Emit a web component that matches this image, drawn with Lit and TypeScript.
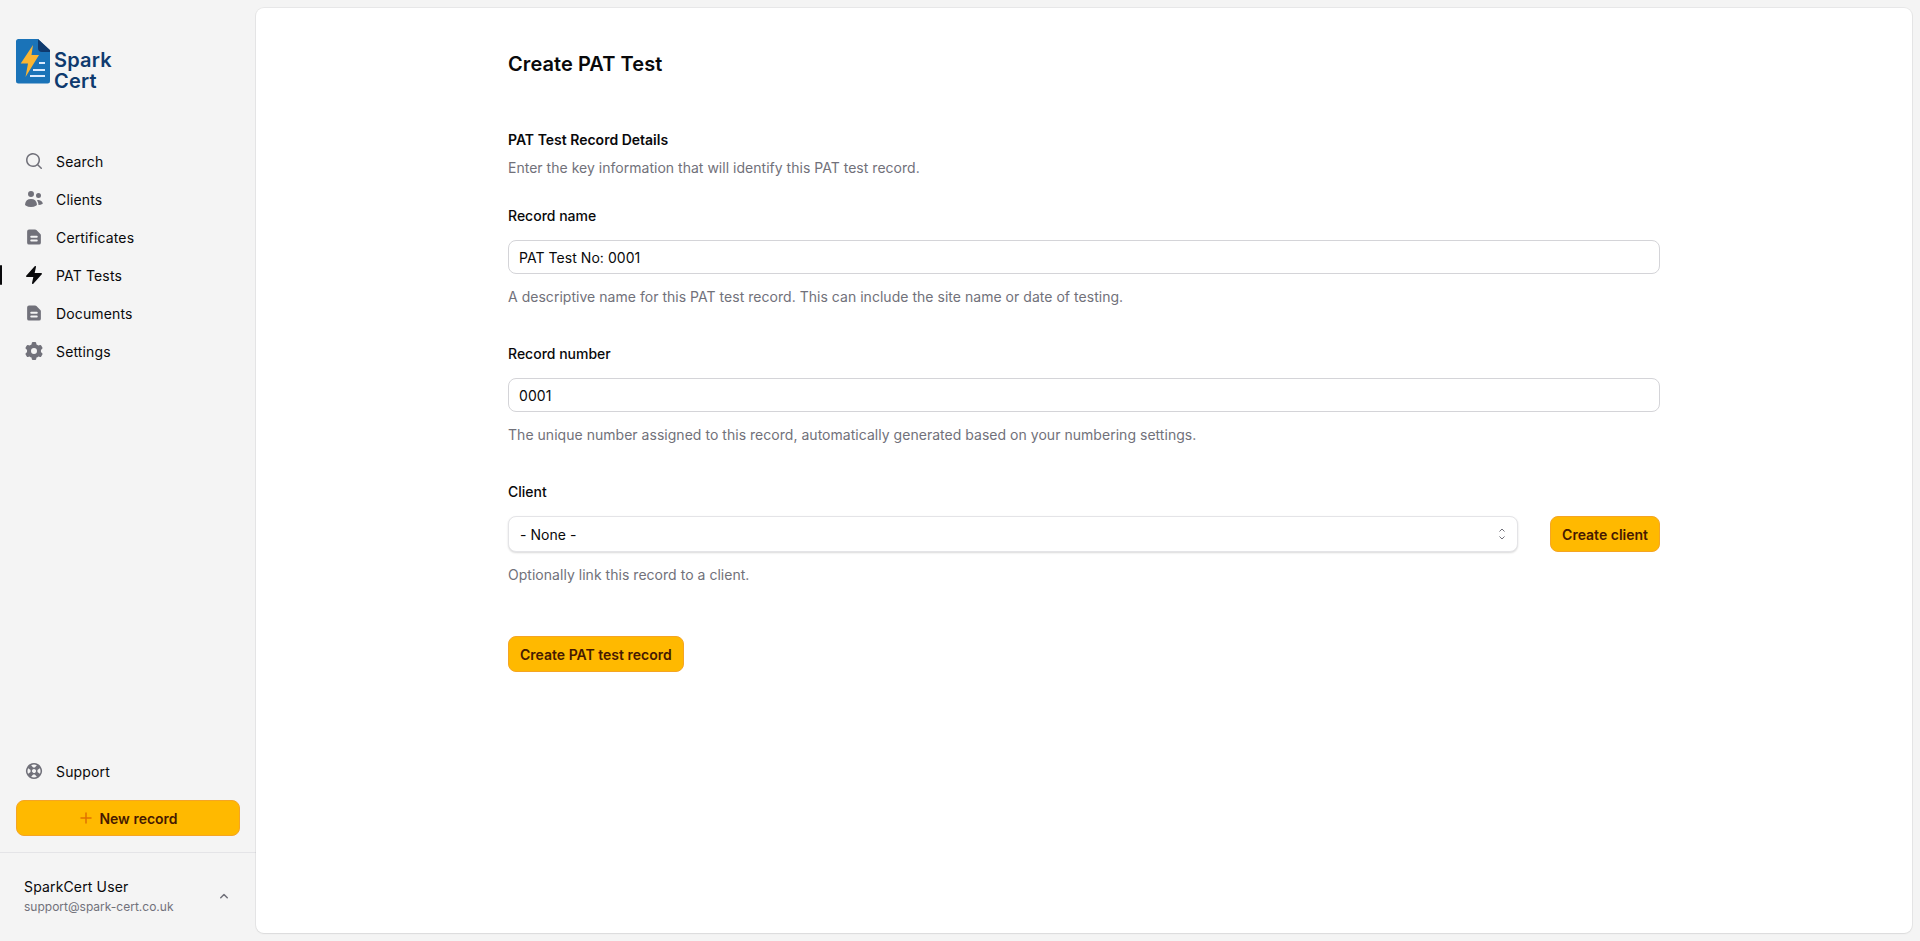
import { LitElement, html, css, svg } from "lit";
import { customElement } from "lit/decorators.js";

const ICONS: Record<string, [string, string]> = {
  search: ["0 0 20 20", "M9 3.5a5.5 5.5 0 1 0 0 11 5.5 5.5 0 0 0 0-11ZM2 9a7 7 0 1 1 12.452 4.391l3.328 3.329a.75.75 0 1 1-1.06 1.06l-3.329-3.328A7 7 0 0 1 2 9Z"],
  users: ["0 0 20 20", "M7 8a3 3 0 1 0 0-6 3 3 0 0 0 0 6ZM14.5 9a2.5 2.5 0 1 0 0-5 2.5 2.5 0 0 0 0 5ZM1.615 16.428a1.224 1.224 0 0 1-.569-1.175 6.002 6.002 0 0 1 11.908 0c.058.467-.172.92-.57 1.174A9.953 9.953 0 0 1 7 18a9.953 9.953 0 0 1-5.385-1.572ZM14.5 16h-.106c.07-.297.088-.611.048-.933a7.47 7.47 0 0 0-1.588-3.755 4.502 4.502 0 0 1 5.874 2.636.818.818 0 0 1-.36.98A7.465 7.465 0 0 1 14.5 16Z"],
  doc: ["0 0 16 16", "M4 2a1.5 1.5 0 0 0-1.5 1.5v9A1.5 1.5 0 0 0 4 14h8a1.5 1.5 0 0 0 1.5-1.5V6.621a1.5 1.5 0 0 0-.44-1.06L9.94 2.439A1.5 1.5 0 0 0 8.878 2H4Zm1 5.75A.75.75 0 0 1 5.75 7h4.5a.75.75 0 0 1 0 1.5h-4.5A.75.75 0 0 1 5 7.75Zm0 3a.75.75 0 0 1 .75-.75h4.5a.75.75 0 0 1 0 1.5h-4.5a.75.75 0 0 1-.75-.75Z"],
  bolt: ["0 0 20 20", "M11.983 1.907a.75.75 0 0 0-1.292-.657l-8.5 9.5A.75.75 0 0 0 2.75 12h6.572l-1.305 6.093a.75.75 0 0 0 1.292.657l8.5-9.5A.75.75 0 0 0 17.25 8h-6.572l1.305-6.093Z"],
  cog: ["0 0 20 20", "M7.84 1.804A1 1 0 0 1 8.82 1h2.36a1 1 0 0 1 .98.804l.331 1.652a6.993 6.993 0 0 1 1.929 1.115l1.598-.54a1 1 0 0 1 1.186.447l1.18 2.044a1 1 0 0 1-.205 1.251l-1.267 1.113a7.047 7.047 0 0 1 0 2.228l1.267 1.113a1 1 0 0 1 .206 1.25l-1.18 2.045a1 1 0 0 1-1.187.447l-1.598-.54a6.993 6.993 0 0 1-1.929 1.115l-.33 1.652a1 1 0 0 1-.98.804H8.82a1 1 0 0 1-.98-.804l-.331-1.652a6.993 6.993 0 0 1-1.929-1.115l-1.598.54a1 1 0 0 1-1.186-.447l-1.18-2.044a1 1 0 0 1 .205-1.251l1.267-1.114a7.05 7.05 0 0 1 0-2.227L1.821 7.773a1 1 0 0 1-.206-1.25l1.18-2.045a1 1 0 0 1 1.187-.447l1.598.54A6.992 6.992 0 0 1 7.51 3.456l.33-1.652ZM10 13a3 3 0 1 0 0-6 3 3 0 0 0 0 6Z"],
  buoy: ["0 0 20 20", "m7.171 4.146 1.947 2.466a3.514 3.514 0 0 1 1.764 0l1.947-2.466a6.52 6.52 0 0 0-5.658 0Zm8.683 3.025-2.466 1.947c.15.578.15 1.186 0 1.764l2.466 1.947a6.52 6.52 0 0 0 0-5.658Zm-3.025 8.683-1.947-2.466c-.578.15-1.186.15-1.764 0l-1.947 2.466a6.52 6.52 0 0 0 5.658 0ZM4.146 12.83l2.466-1.947a3.514 3.514 0 0 1 0-1.764L4.146 7.171a6.52 6.52 0 0 0 0 5.658ZM5.63 3.297a8.01 8.01 0 0 1 8.738 0 8.031 8.031 0 0 1 2.334 2.334 8.01 8.01 0 0 1 0 8.738 8.033 8.033 0 0 1-2.334 2.334 8.01 8.01 0 0 1-8.738 0 8.032 8.032 0 0 1-2.334-2.334 8.01 8.01 0 0 1 0-8.738A8.03 8.03 0 0 1 5.63 3.297Zm5.198 4.882a2.008 2.008 0 0 0-2.243.407 1.994 1.994 0 0 0-.407 2.243 1.993 1.993 0 0 0 .992.992 2.008 2.008 0 0 0 2.243-.407c.176-.175.31-.374.407-.585a2.008 2.008 0 0 0-.407-2.243 1.993 1.993 0 0 0-.585-.407Z"],
};

function icon(name: string) {
  const [vb, d] = ICONS[name];
  return html`<svg class="icon" viewBox=${vb} fill="currentColor" fill-rule="evenodd">${svg`<path d=${d}></path>`}</svg>`;
}

const NAV = [
  { label: "Search", icon: "search" },
  { label: "Clients", icon: "users" },
  { label: "Certificates", icon: "doc" },
  { label: "PAT Tests", icon: "bolt", active: true },
  { label: "Documents", icon: "doc" },
  { label: "Settings", icon: "cog" },
];

@customElement("app-root")
export class AppRoot extends LitElement {
  static styles = css`
    :host {
      display: flex;
      height: 100vh;
      min-height: 941px;
      background: #f4f4f4;
      font-family: Inter, "Liberation Sans", sans-serif;
      color: #09090b;
      font-size: 14px;
      overflow: hidden;
    }
    .sidebar {
      width: 256px;
      flex: none;
      display: flex;
      flex-direction: column;
    }
    .brand {
      padding: 39px 16px 0;
      height: 143px;
      box-sizing: border-box;
      flex: none;
    }
    .logo {
      display: flex;
      align-items: flex-start;
    }
    .logo svg {
      width: 34px;
      height: 45px;
      flex: none;
    }
    .logo-text {
      margin: 11px 0 0 4px;
      font-size: 20px;
      line-height: 21px;
      font-weight: 600;
      letter-spacing: 0.2px;
      color: #0f3a6e;
    }
    nav {
      display: flex;
      flex-direction: column;
      gap: 2px;
      padding: 0 16px;
    }
    .item {
      position: relative;
      display: flex;
      align-items: center;
      gap: 12px;
      height: 36px;
      padding: 0 8px;
      font-weight: 400;
      letter-spacing: 0.15px;
      color: #09090b;
    }
    .item .icon {
      width: 20px;
      height: 20px;
      flex: none;
      color: #71717a;
    }
    .item.active .icon {
      color: #09090b;
    }
    .bar {
      position: absolute;
      left: -16px;
      top: 8px;
      bottom: 8px;
      width: 2px;
      border-radius: 1px;
      background: #09090b;
    }
    .spacer {
      flex: 1;
    }
    .bottom {
      padding: 0 16px 16px;
      display: flex;
      flex-direction: column;
      gap: 11px;
    }
    .btn {
      display: inline-flex;
      align-items: center;
      justify-content: center;
      gap: 5px;
      box-sizing: border-box;
      height: 36px;
      padding: 0 11px;
      border-radius: 8px;
      border: 1px solid #f5a524;
      background: #ffb900;
      color: #461901;
      font: 600 14px Inter, "Liberation Sans", sans-serif;
      white-space: nowrap;
    }
    .btn svg {
      width: 16px;
      height: 16px;
      color: #e17100;
    }
    .btn.wide {
      width: 100%;
    }
    .user {
      border-top: 1px solid #e4e4e7;
      padding: 16px 24px 18px;
      height: 89px;
      box-sizing: border-box;
      display: flex;
      align-items: center;
      justify-content: space-between;
    }
    .user-name {
      font-weight: 400;
      letter-spacing: 0.15px;
      line-height: 20px;
    }
    .user-mail {
      font-size: 12px;
      line-height: 19px;
      color: #71717a;
    }
    .user svg {
      width: 16px;
      height: 16px;
      color: #71717a;
    }
    .panel {
      flex: 1;
      margin: 8px 8px 8px 0;
      padding: 40px;
      background: #fff;
      border-radius: 8px;
      box-shadow: 0 1px 2px rgba(0, 0, 0, 0.06), 0 0 0 1px rgba(9, 9, 11, 0.05);
      min-width: 0;
    }
    .content {
      max-width: 1152px;
      margin: 0 auto;
    }
    h1 {
      margin: 0 0 48px;
      font-size: 20px;
      line-height: 32px;
      font-weight: 600;
      letter-spacing: 0.07px;
    }
    h2 {
      margin: 0;
      font-size: 14px;
      line-height: 24px;
      font-weight: 600;
    }
    .desc {
      margin: 4px 0 24px;
      line-height: 24px;
      color: #71717a;
      letter-spacing: 0.02px;
    }
    .field {
      display: flex;
      flex-direction: column;
      margin-bottom: 33px;
    }
    label {
      font-weight: 500;
      line-height: 24px;
      margin-bottom: 12px;
    }
    .hint {
      line-height: 24px;
      margin-top: 11px;
      color: #71717a;
      letter-spacing: 0.03px;
    }
    .control {
      box-sizing: border-box;
      width: 100%;
      border: 1px solid #d4d4d8;
      border-radius: 8px;
      background: #fff;
      padding: 0 10px;
      font: 400 14px Inter, "Liberation Sans", sans-serif;
      letter-spacing: 0.05px;
      color: #09090b;
      outline: none;
    }
    input.control {
      height: 34px;
    }
    .row {
      display: flex;
      gap: 32px;
    }
    .select-wrap {
      position: relative;
      flex: 1;
    }
    select.control {
      height: 36px;
      appearance: none;
      padding-left: 11px;
      border-color: #e4e4e7;
      box-shadow: 0 1px 2px rgba(0, 0, 0, 0.15);
    }
    .chev {
      position: absolute;
      right: 8px;
      top: 10px;
      width: 16px;
      height: 16px;
      pointer-events: none;
    }
    .actions {
      margin-top: 49px;
    }
  `;

  render() {
    return html`
      <aside class="sidebar">
        <div class="brand">
          <div class="logo">
            <svg viewBox="0 0 34 45">
              <path d="M2.5 0H22L34 12V42a2.5 2.5 0 0 1-2.5 2.5h-29A2.5 2.5 0 0 1 0 42V2.5A2.5 2.5 0 0 1 2.5 0Z" fill="#1a73b8"></path>
              <path d="M22 0 34 11V13H26a4 4 0 0 1-4-4Z" fill="#0f3a6e"></path>
              <path d="M17 6 4.7 24.5H12L9.5 38 23 16H15.5Z" fill="#fbb531"></path>
              <path d="M23 24h6M17 31h12M14 37h15" stroke="#dbeafe" stroke-width="1.8" fill="none"></path>
            </svg>
            <div class="logo-text">Spark<br />Cert</div>
          </div>
        </div>
        <nav>
          ${NAV.map(
            (n) => html`<div class="item ${n.active ? "active" : ""}">
              ${n.active ? html`<span class="bar"></span>` : ""} ${icon(n.icon)}<span>${n.label}</span>
            </div>`
          )}
        </nav>
        <div class="spacer"></div>
        <div class="bottom">
          <div class="item">${icon("buoy")}<span>Support</span></div>
          <div class="btn wide">
            <svg viewBox="0 0 16 16" fill="none" stroke="currentColor" stroke-width="1.5" stroke-linecap="round"><path d="M8 3v10M3 8h10"></path></svg>
            New record
          </div>
        </div>
        <div class="user">
          <div>
            <div class="user-name">SparkCert User</div>
            <div class="user-mail">support@spark-cert.co.uk</div>
          </div>
          <svg viewBox="0 0 16 16" fill="none" stroke="currentColor" stroke-width="1.5" stroke-linecap="round" stroke-linejoin="round"><path d="M4.75 9.75 8 6.5l3.25 3.25"></path></svg>
        </div>
      </aside>
      <main class="panel">
        <div class="content">
          <h1>Create PAT Test</h1>
          <h2>PAT Test Record Details</h2>
          <div class="desc">Enter the key information that will identify this PAT test record.</div>
          <div class="field">
            <label>Record name</label>
            <input class="control" value="PAT Test No: 0001" />
            <div class="hint">A descriptive name for this PAT test record. This can include the site name or date of testing.</div>
          </div>
          <div class="field">
            <label>Record number</label>
            <input class="control" value="0001" />
            <div class="hint">The unique number assigned to this record, automatically generated based on your numbering settings.</div>
          </div>
          <div class="field">
            <label>Client</label>
            <div class="row">
              <div class="select-wrap">
                <select class="control"><option>- None -</option></select>
                <svg class="chev" viewBox="0 0 16 16" fill="none" stroke="#71717a" stroke-width="1" stroke-linecap="round" stroke-linejoin="round"><path d="M5.75 10.75 8 13l2.25-2.25M10.25 5.25 8 3 5.75 5.25"></path></svg>
              </div>
              <div class="btn">Create client</div>
            </div>
            <div class="hint">Optionally link this record to a client.</div>
          </div>
          <div class="actions"><div class="btn">Create PAT test record</div></div>
        </div>
      </main>
    `;
  }
}
